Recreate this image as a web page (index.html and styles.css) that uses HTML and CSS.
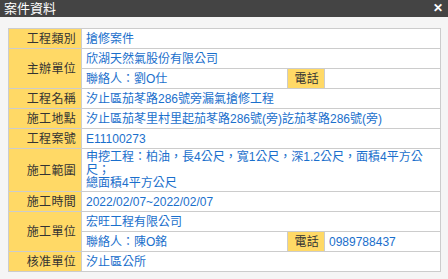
FILE: index.html
```html
<!DOCTYPE html>
<html lang="zh-Hant">
<head>
    <meta charset="UTF-8">
    <meta name="viewport" content="width=device-width, initial-scale=1.0">
    <title>案件資料</title>
    <link rel="stylesheet" href="styles.css">
</head>
<body>
    <div class="dialog">
        <div class="title-bar">
            <span class="title">案件資料</span>
            <span class="close">&#x2715;</span>
        </div>
        <div class="content">
            <table class="case-table">
                <colgroup>
                    <col class="c-label">
                    <col class="c-main">
                    <col class="c-tel">
                    <col>
                </colgroup>
                <tr>
                    <th>工程類別</th>
                    <td colspan="3">搶修案件</td>
                </tr>
                <tr>
                    <th rowspan="2">主辦單位</th>
                    <td colspan="3">欣湖天然氣股份有限公司</td>
                </tr>
                <tr>
                    <td>聯絡人：劉O仕</td>
                    <th>電話</th>
                    <td></td>
                </tr>
                <tr>
                    <th>工程名稱</th>
                    <td colspan="3">汐止區茄苳路286號旁漏氣搶修工程</td>
                </tr>
                <tr>
                    <th>施工地點</th>
                    <td colspan="3">汐止區茄苳里村里起茄苳路286號(旁)訖茄苳路286號(旁)</td>
                </tr>
                <tr>
                    <th>工程案號</th>
                    <td colspan="3">E11100273</td>
                </tr>
                <tr>
                    <th>施工範圍</th>
                    <td colspan="3" class="multi">申挖工程：柏油，長4公尺，寬1公尺，深1.2公尺，面積4平方公尺；<br>總面積4平方公尺</td>
                </tr>
                <tr>
                    <th>施工時間</th>
                    <td colspan="3">2022/02/07~2022/02/07</td>
                </tr>
                <tr>
                    <th rowspan="2">施工單位</th>
                    <td colspan="3">宏旺工程有限公司</td>
                </tr>
                <tr>
                    <td>聯絡人：陳O銘</td>
                    <th>電話</th>
                    <td>0989788437</td>
                </tr>
                <tr>
                    <th>核准單位</th>
                    <td colspan="3">汐止區公所</td>
                </tr>
            </table>
        </div>
    </div>
</body>
</html>
```

FILE: styles.css
```css
body {
    margin: 0;
    font-family: "Liberation Sans", Arial, "Noto Sans CJK TC", sans-serif;
    font-size: 12px;
    background: #f5f5f5;
}
.title-bar {
    background: #444444;
    color: white;
    height: 17px;
    display: flex;
    align-items: center;
    justify-content: space-between;
    padding: 0 5px 0 4px;
}
.title {
    font-size: 13px;
    line-height: 17px;
}
.close {
    font-size: 12px;
    font-weight: bold;
    line-height: 17px;
}
.content {
    padding: 11px 7px 10px 8px;
}
.case-table {
    width: 100%;
    border-collapse: collapse;
    table-layout: fixed;
    background: white;
}
.c-label {
    width: 73px;
}
.c-main {
    width: 206px;
}
.c-tel {
    width: 37px;
}
.case-table th,
.case-table td {
    border: 1px solid #cccccc;
    line-height: 12px;
    padding: 4px 4px 3px;
    height: 12px;
}
.case-table th {
    background: #ffd966;
    color: #333333;
    font-weight: normal;
    text-align: right;
    padding-right: 5px;
    letter-spacing: 0.3px;
}
.case-table td {
    color: #1a6fcc;
    text-align: left;
}
.case-table td.multi {
    line-height: 13px;
    padding-top: 2px;
    padding-bottom: 1px;
}
```
